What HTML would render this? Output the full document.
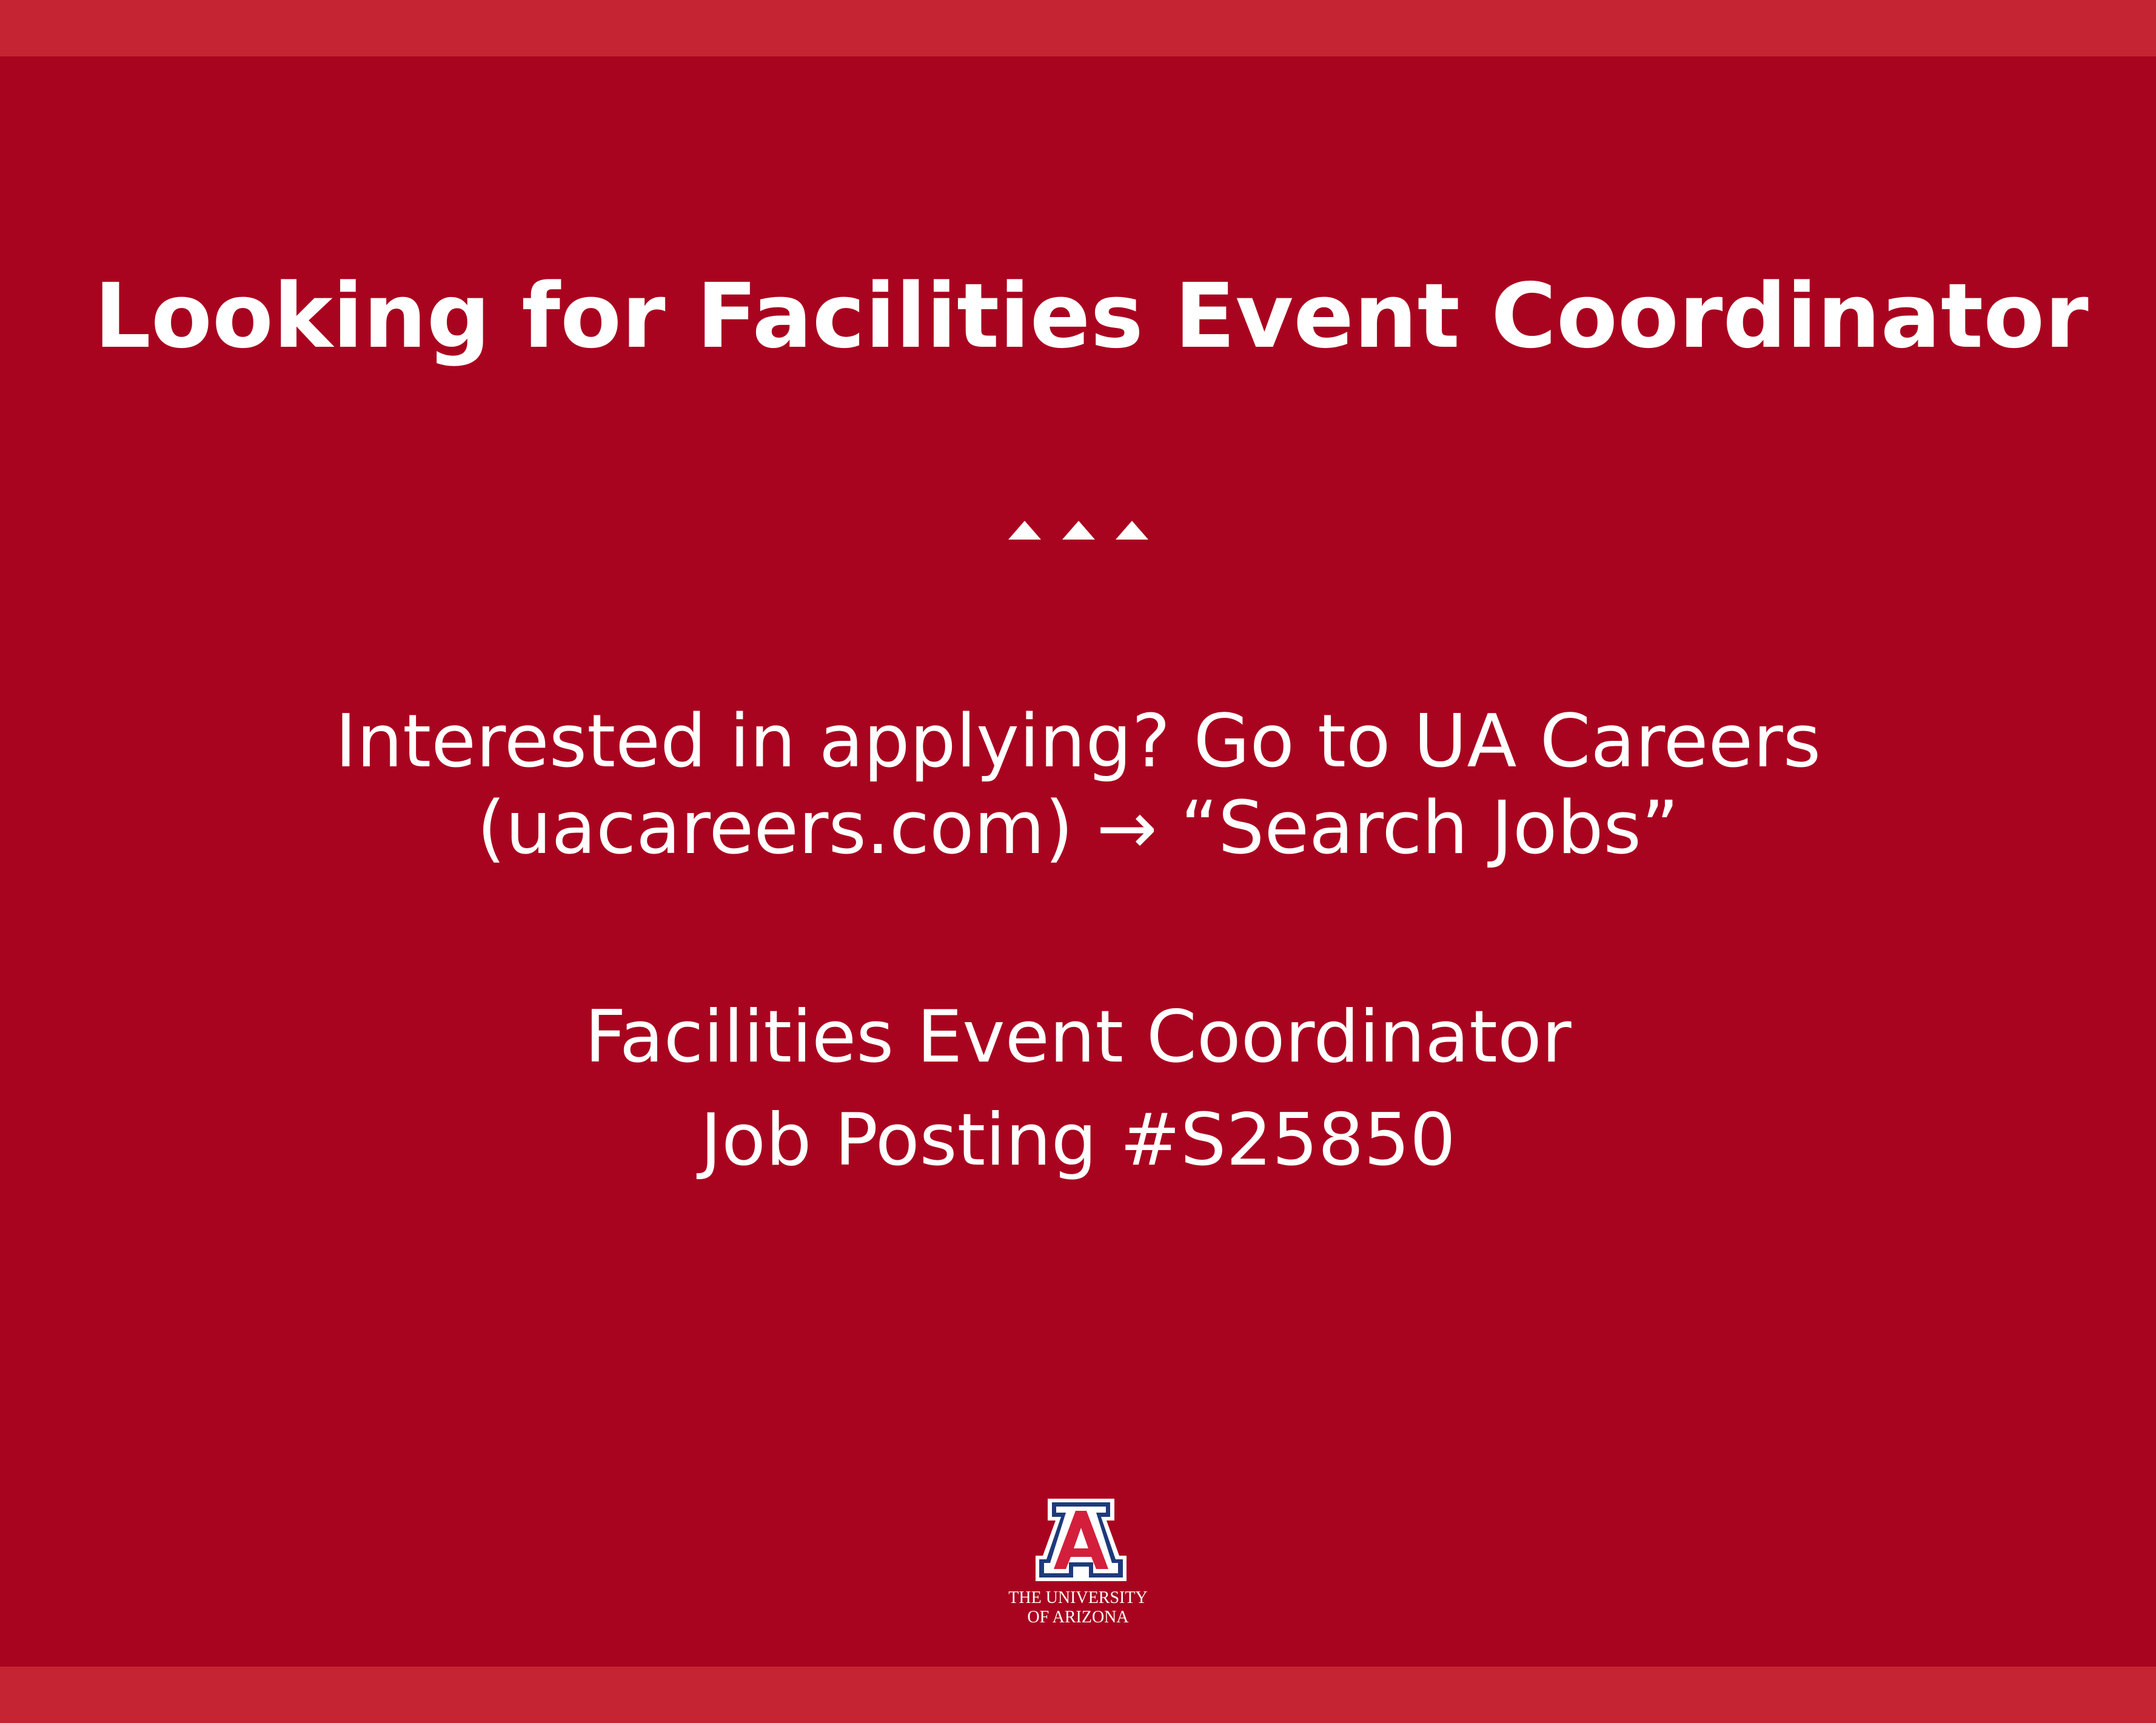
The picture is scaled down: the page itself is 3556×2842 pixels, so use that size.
<!DOCTYPE html>
<html><head><meta charset="utf-8"><style>
html,body{margin:0;padding:0}
body{width:3556px;height:2842px;background:#a9041f;position:relative;overflow:hidden;font-family:"DejaVu Sans","Liberation Sans",sans-serif;color:#fff}
.bar{position:absolute;left:0;width:3556px;background:#c52532}
.t{position:absolute;left:0;width:3556px;text-align:center;white-space:nowrap;line-height:1}
</style></head><body>
<div class="bar" style="top:0;height:93px"></div>
<div class="bar" style="top:2749px;height:93px"></div>
<div class="t" style="top:448px;left:22px;font-size:147px;font-weight:bold">Looking for Facilities Event Coordinator</div>
<svg style="position:absolute;left:1660px;top:855px" width="240" height="40">
<polygon points="3,35 30,4 57,35" fill="#fff"/>
<polygon points="92,35 119,4 146,35" fill="#fff"/>
<polygon points="180,35 207,4 234,35" fill="#fff"/>
</svg>
<div class="t" style="top:1164px;font-size:120px">Interested in applying? Go to UA Careers</div>
<div class="t" style="top:1307px;font-size:120px">(uacareers.com) → “Search Jobs”</div>
<div class="t" style="top:1652px;font-size:119px">Facilities Event Coordinator</div>
<div class="t" style="top:1822px;font-size:119px">Job Posting #S25850</div>
<svg style="position:absolute;left:1708px;top:2472px" width="150" height="136" viewBox="0 0 150 136">
<polygon points="20,0 130,0 130,36 117,36 138,94 150,94 150,136 0,136 0,94 12,94 33,36 20,36" fill="#fff"/>
<polygon points="27,6 123,6 123,30 108,30 132,100 144,100 144,130 88,130 88,112 62,112 62,130 6,130 6,100 18,100 42,30 27,30" fill="#1e3a7b"/>
<polygon points="34,13 116,13 116,23 100,23 126,106 136,106 136,123 95,123 95,105 55,105 55,123 14,123 14,106 24,106 50,23 34,23" fill="#fff"/>
<polygon points="66,20 84,20 120,116 100,116 92,96 58,96 50,116 30,116" fill="#d31f3c"/>
<polygon points="75,48 87,82 63,82" fill="#fff"/>
</svg>
<div class="t" style="top:2622px;font-family:'Liberation Serif',serif;font-size:28px">THE UNIVERSITY</div>
<div class="t" style="top:2654px;font-family:'Liberation Serif',serif;font-size:28px">OF ARIZONA</div>
</body></html>
